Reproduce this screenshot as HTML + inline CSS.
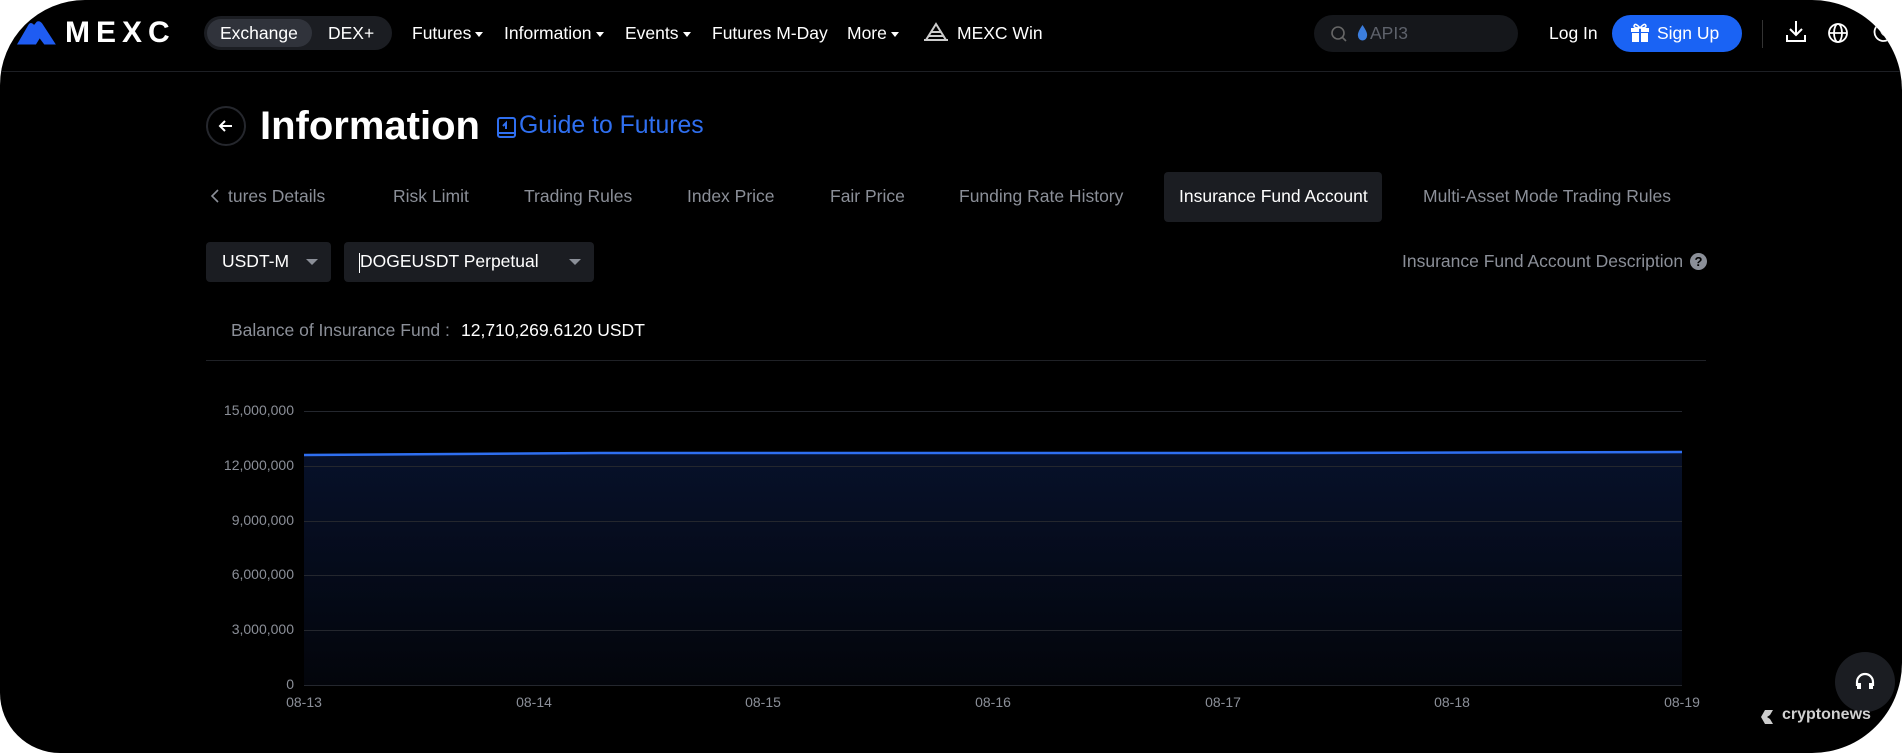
<!DOCTYPE html>
<html><head><meta charset="utf-8"><style>
*{margin:0;padding:0;box-sizing:border-box}
html,body{width:1904px;height:755px;background:#fff;overflow:hidden;font-family:"Liberation Sans",Arial,sans-serif}
#f{position:absolute;left:0;top:0;width:1902px;height:753px;background:#000;border-radius:85px 90px 90px 60px;overflow:hidden}
.a{position:absolute;white-space:nowrap}
.nav{color:#fff;font-size:17.5px;top:23px}
.tri{display:inline-block;width:0;height:0;border-left:4px solid transparent;border-right:4px solid transparent;border-top:5px solid currentColor;vertical-align:middle;margin-left:4px}
.tab{color:#8b8f98;font-size:17.5px;top:186px}
.yl{color:#8b8f98;font-size:14px;text-align:right;width:100px;left:194px}
.xl{color:#8b8f98;font-size:14px;top:694px;width:60px;text-align:center}
</style></head><body><div id="f">
<div class="a" style="left:0;top:71px;width:1904px;height:1px;background:#1d1f24"></div>
<svg class="a" style="left:17px;top:21px" width="42" height="24" viewBox="0 0 40 22"><path d="M0 22 L11 3 Q13 0 16 3 L23 14 L18 22 Z" fill="#1f5cf2"/><path d="M14 6 L19 0 Q22 -1 24 2 L37 22 L26 22 Z" fill="#1f5cf2"/></svg>
<div class="a" style="left:65px;top:16px;color:#fff;font-size:30px;font-weight:bold;letter-spacing:6px">MEXC</div>
<div class="a" style="left:204px;top:16px;width:188px;height:34px;border-radius:17px;background:#1b1d22"></div>
<div class="a" style="left:207px;top:19px;width:105px;height:28px;border-radius:14px;background:#30333b"></div>
<div class="a nav" style="left:220px">Exchange</div>
<div class="a nav" style="left:328px">DEX+</div>
<div class="a nav" style="left:412px">Futures<span class="tri"></span></div>
<div class="a nav" style="left:504px">Information<span class="tri"></span></div>
<div class="a nav" style="left:625px">Events<span class="tri"></span></div>
<div class="a nav" style="left:712px">Futures M-Day</div>
<div class="a nav" style="left:847px">More<span class="tri"></span></div>
<svg class="a" style="left:922px;top:22px" width="28" height="22" viewBox="0 0 28 22"><path d="M4 18 L14 2 L24 18 M9 10h10 M2 18h24 M7 14h14" stroke="#ccc" stroke-width="2" fill="none"/></svg>
<div class="a nav" style="left:957px">MEXC Win</div>
<div class="a" style="left:1314px;top:15px;width:204px;height:37px;border-radius:19px;background:#15171b"></div>
<svg class="a" style="left:1330px;top:25px" width="18" height="18" viewBox="0 0 18 18"><circle cx="8" cy="8" r="6" stroke="#666" stroke-width="1.6" fill="none"/><path d="M12.5 12.5L16 16" stroke="#666" stroke-width="1.6"/></svg>
<svg class="a" style="left:1357px;top:25px" width="11" height="16" viewBox="0 0 11 16"><path d="M5.5 0 Q11 8 10 11 A4.5 4.5 0 0 1 1 11 Q0 8 5.5 0Z" fill="#3b7ddd"/></svg>
<div class="a" style="left:1370px;top:23px;color:#5e626b;font-size:17.5px">API3</div>
<div class="a nav" style="left:1549px">Log In</div>
<div class="a" style="left:1612px;top:15px;width:130px;height:37px;border-radius:19px;background:#1a63f4"></div>
<svg class="a" style="left:1630px;top:23px" width="20" height="19" viewBox="0 0 20 19"><rect x="1" y="5" width="18" height="4" fill="#fff"/><rect x="2" y="10" width="16" height="9" fill="#fff"/><path d="M9 5v14h2V5z" fill="#1a63f4"/><path d="M10 5 Q5 -1 4 3 Q4 5 10 5 Q15 -1 16 3 Q16 5 10 5" stroke="#fff" stroke-width="1.5" fill="none"/></svg>
<div class="a nav" style="left:1657px">Sign Up</div>
<div class="a" style="left:1762px;top:20px;width:1px;height:28px;background:#333"></div>
<svg class="a" style="left:1785px;top:19px" width="22" height="24" viewBox="0 0 22 24"><path d="M11 2v14 M5 10l6 6 6-6 M2 16v6h18v-6" stroke="#fff" stroke-width="2" fill="none"/></svg>
<svg class="a" style="left:1827px;top:22px" width="22" height="22" viewBox="0 0 22 22"><circle cx="11" cy="11" r="9" stroke="#fff" stroke-width="1.8" fill="none"/><ellipse cx="11" cy="11" rx="4" ry="9" stroke="#fff" stroke-width="1.8" fill="none"/><path d="M2 11h18" stroke="#fff" stroke-width="1.8"/></svg>
<svg class="a" style="left:1872px;top:21px" width="22" height="22" viewBox="0 0 22 22"><path d="M12 2 A9 9 0 1 0 20 14 A7 7 0 0 1 12 2Z" stroke="#fff" stroke-width="1.8" fill="none"/></svg>

<div class="a" style="left:206px;top:106px;width:40px;height:40px;border-radius:50%;border:2px solid #25272d"></div>
<svg class="a" style="left:216px;top:116px" width="20" height="20" viewBox="0 0 20 20"><path d="M16 10H4 M9 5L4 10l5 5" stroke="#fff" stroke-width="2" fill="none"/></svg>
<div class="a" style="left:260px;top:104px;color:#fff;font-size:40px;font-weight:bold">Information</div>
<svg class="a" style="left:497px;top:117px" width="19" height="21" viewBox="0 0 19 21"><rect x="1" y="1" width="17" height="19" rx="2" stroke="#2f6ff0" stroke-width="2" fill="none"/><path d="M1 16h17 M9 12V6l-3 3" stroke="#2f6ff0" stroke-width="2" fill="none"/></svg>
<div class="a" style="left:519px;top:112px;color:#2f6ff0;font-size:24.8px">Guide to Futures</div>

<svg class="a" style="left:210px;top:188px" width="10" height="16" viewBox="0 0 10 16"><path d="M8 2L2 8l6 6" stroke="#8b8f98" stroke-width="1.6" fill="none"/></svg>
<div class="a tab" style="left:228px">tures Details</div>
<div class="a tab" style="left:393px">Risk Limit</div>
<div class="a tab" style="left:524px">Trading Rules</div>
<div class="a tab" style="left:687px">Index Price</div>
<div class="a tab" style="left:830px">Fair Price</div>
<div class="a tab" style="left:959px">Funding Rate History</div>
<div class="a" style="left:1164px;top:172px;width:218px;height:50px;border-radius:4px;background:#1b1d22"></div>
<div class="a tab" style="left:1179px;color:#fff">Insurance Fund Account</div>
<div class="a tab" style="left:1423px">Multi-Asset Mode Trading Rules</div>

<div class="a" style="left:206px;top:242px;width:125px;height:40px;border-radius:4px;background:#1b1d22"></div>
<div class="a" style="left:222px;top:251px;color:#fff;font-size:17.5px">USDT-M</div>
<div class="a" style="left:302px;top:253px;color:#8b8f98"><span class="tri" style="border-left-width:6px;border-right-width:6px;border-top-width:6px"></span></div>
<div class="a" style="left:344px;top:242px;width:250px;height:40px;border-radius:4px;background:#1b1d22"></div>
<div class="a" style="left:360px;top:251px;color:#fff;font-size:17.5px">DOGEUSDT Perpetual</div>
<div class="a" style="left:359px;top:253px;width:1px;height:20px;background:#fff"></div>
<div class="a" style="left:565px;top:253px;color:#8b8f98"><span class="tri" style="border-left-width:6px;border-right-width:6px;border-top-width:6px"></span></div>
<div class="a" style="left:1402px;top:251px;color:#8b8f98;font-size:17.5px">Insurance Fund Account Description</div>
<div class="a" style="left:1690px;top:253px;width:17px;height:17px;border-radius:50%;background:#8b8f98;color:#000;font-size:13px;font-weight:bold;text-align:center;line-height:17px">?</div>

<div class="a" style="left:231px;top:320px;color:#8b8f98;font-size:17.5px">Balance of Insurance Fund :</div>
<div class="a" style="left:461px;top:320px;color:#fff;font-size:17.5px">12,710,269.6120 USDT</div>
<div class="a" style="left:206px;top:360px;width:1500px;height:1px;background:#1f2126"></div>

<svg class="a" style="left:0;top:0" width="1904" height="755">
<defs><linearGradient id="g" x1="0" y1="0" x2="0" y2="1"><stop offset="0" stop-color="#07112a"/><stop offset="1" stop-color="#03050b"/></linearGradient></defs>
<path d="M304 455 L600 453 L1000 453 L1300 453 L1682 452 L1682 685 L304 685Z" fill="url(#g)"/>
<g stroke="#24272e" stroke-width="1"><path d="M304 411.5H1682M304 466.5H1682M304 521.5H1682M304 575.5H1682M304 630.5H1682M304 685.5H1682"/></g>
<path d="M304 455 L600 453 L1000 453 L1300 453 L1682 452" stroke="#2f6ff0" stroke-width="2.5" fill="none"/>
</svg>
<div class="a yl" style="top:402px">15,000,000</div>
<div class="a yl" style="top:457px">12,000,000</div>
<div class="a yl" style="top:512px">9,000,000</div>
<div class="a yl" style="top:566px">6,000,000</div>
<div class="a yl" style="top:621px">3,000,000</div>
<div class="a yl" style="top:676px">0</div>
<div class="a xl" style="left:274px">08-13</div>
<div class="a xl" style="left:504px">08-14</div>
<div class="a xl" style="left:733px">08-15</div>
<div class="a xl" style="left:963px">08-16</div>
<div class="a xl" style="left:1193px">08-17</div>
<div class="a xl" style="left:1422px">08-18</div>
<div class="a xl" style="left:1652px">08-19</div>

<div class="a" style="left:1835px;top:652px;width:60px;height:60px;border-radius:50%;background:#1b1d22"></div>
<svg class="a" style="left:1853px;top:670px" width="24" height="24" viewBox="0 0 24 24"><path d="M4 16v-4a8 8 0 0 1 16 0v4" stroke="#fff" stroke-width="2.2" fill="none"/><rect x="4" y="13" width="4" height="6" fill="#fff"/><rect x="16" y="13" width="4" height="6" fill="#fff"/></svg>
<svg class="a" style="left:1761px;top:708px" width="16" height="18" viewBox="0 0 16 18"><path d="M12 2 L4 2 L0 9 L4 16 L12 16 L9 11 L6 9 L9 7Z" fill="#ccc"/></svg>
<div class="a" style="left:1782px;top:706px;color:#d0d0d0;font-size:16px;font-weight:bold">cryptonews</div>
</div></body></html>
